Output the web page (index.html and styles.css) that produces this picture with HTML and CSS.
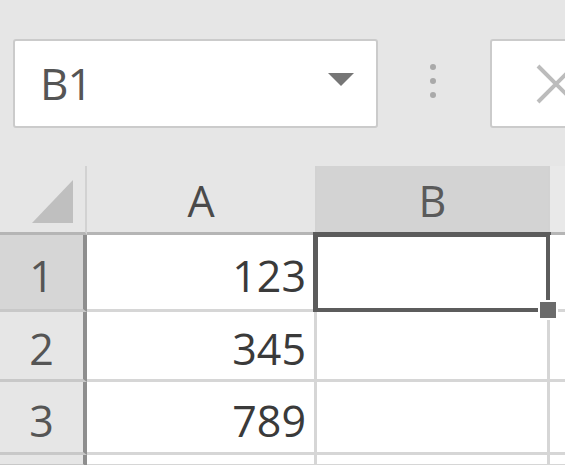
FILE: index.html
```html
<!DOCTYPE html>
<html>
<head>
<meta charset="utf-8">
<link rel="stylesheet" href="styles.css">
</head>
<body>
<div class="app">
  <div class="toolbar">
    <div class="namebox">
      <span class="ref">B1</span>
      <span class="caret"></span>
    </div>
    <div class="dots"><i></i><i></i><i></i></div>
    <div class="formula">
      <svg class="cancel" width="40" height="40" viewBox="0 0 40 40">
        <path d="M2 2 L38 38 M38 2 L2 38" stroke="#bcbcbc" stroke-width="4" fill="none"/>
      </svg>
    </div>
  </div>
  <div class="sheet">
    <div class="cell corner"><span class="tri"></span></div>
    <div class="cell colhead">A</div>
    <div class="cell colhead sel">B</div>
    <div class="cell colhead last"></div>

    <div class="cell rowhead sel">1</div>
    <div class="cell num">123</div>
    <div class="cell active"><span class="handle"></span></div>
    <div class="cell last"></div>

    <div class="cell rowhead">2</div>
    <div class="cell num">345</div>
    <div class="cell"></div>
    <div class="cell last"></div>

    <div class="cell rowhead">3</div>
    <div class="cell num">789</div>
    <div class="cell"></div>
    <div class="cell last"></div>

    <div class="cell rowhead"></div>
    <div class="cell"></div>
    <div class="cell"></div>
    <div class="cell last"></div>
  </div>
</div>
</body>
</html>
```

FILE: styles.css
```css
html, body {
  margin: 0;
  padding: 0;
  width: 565px;
  height: 465px;
  overflow: hidden;
  background: #e6e6e6;
}

.app {
  width: 565px;
  height: 465px;
  overflow: hidden;
  font-family: "Open Sans", "Noto Sans", sans-serif;
  color: #444;
}

.toolbar {
  display: flex;
  align-items: center;
  padding-top: 39px;
  height: 89px;
  overflow: hidden;
}

.namebox {
  box-sizing: border-box;
  flex: none;
  margin-left: 13px;
  width: 365px;
  height: 89px;
  background: #fff;
  border: 2px solid #cbcbcb;
  border-radius: 3px;
  display: flex;
  align-items: center;
  justify-content: space-between;
  padding: 0 22px 0 25px;
}

.ref {
  font-size: 44px;
  color: #555;
  letter-spacing: -1px;
  line-height: 1;
  margin-top: -2px;
}

.caret {
  width: 0;
  height: 0;
  border-left: 13px solid transparent;
  border-right: 13px solid transparent;
  border-top: 13px solid #767676;
  margin-top: -8px;
}

.dots {
  flex: none;
  width: 6px;
  margin-left: 52px;
  display: flex;
  flex-direction: column;
  gap: 8px;
  margin-top: -6px;
}

.dots i {
  display: block;
  width: 6px;
  height: 6px;
  border-radius: 50%;
  background: #a9a9a9;
}

.formula {
  box-sizing: border-box;
  flex: none;
  margin-left: 54px;
  width: 120px;
  height: 89px;
  background: #fff;
  border: 2px solid #cbcbcb;
  border-radius: 3px;
  position: relative;
}

.cancel {
  position: absolute;
  left: 44px;
  top: 23px;
}

.sheet {
  margin-top: 38px;
  display: grid;
  grid-template-columns: 87px 230px 233px 1fr;
  grid-template-rows: 69px 77px 70px 73px 12px;
}

.cell {
  box-sizing: border-box;
  background: #fff;
  border-right: 3px solid #d6d6d6;
  border-bottom: 3px solid #d6d6d6;
  font-size: 43px;
  line-height: 1;
  display: flex;
  align-items: center;
  position: relative;
}

.cell.last {
  border-right: none;
}

.corner {
  background: #e6e6e6;
  border-right: 2px solid #d2d2d2;
  border-bottom: 3px solid #b5b5b5;
}

.tri {
  position: absolute;
  left: 32px;
  top: 14px;
  width: 0;
  height: 0;
  border-left: 41px solid transparent;
  border-bottom: 43px solid #bfbfbf;
}

.colhead {
  background: #e6e6e6;
  border-right: 2px solid #d2d2d2;
  border-bottom: 3px solid #b5b5b5;
  justify-content: center;
  color: #4a4a4a;
  padding-top: 2px;
}

.colhead.sel {
  background: #d3d3d3;
  color: #5a5a5a;
  border-bottom-color: #5c5c5c;
}

.colhead.last {
  border-right: none;
  background: #e9e9e9;
}

.rowhead {
  background: #e6e6e6;
  border-right: 4px solid #8e8e8e;
  border-bottom: 3px solid #c8c8c8;
  justify-content: center;
  color: #555;
  padding-top: 6px;
}

.rowhead.sel {
  background: #d6d6d6;
}

.num {
  justify-content: flex-end;
  padding-right: 8px;
  padding-top: 6px;
  color: #3a3a3a;
}

.active::before {
  content: "";
  position: absolute;
  left: -4px;
  top: -3px;
  right: -4px;
  bottom: -4px;
  border: 5px solid #5c5c5c;
  pointer-events: none;
}

.handle {
  position: absolute;
  right: -11px;
  bottom: -11px;
  width: 16px;
  height: 16px;
  background: #6b6b6b;
  border: 2px solid #fff;
  z-index: 2;
}
```
